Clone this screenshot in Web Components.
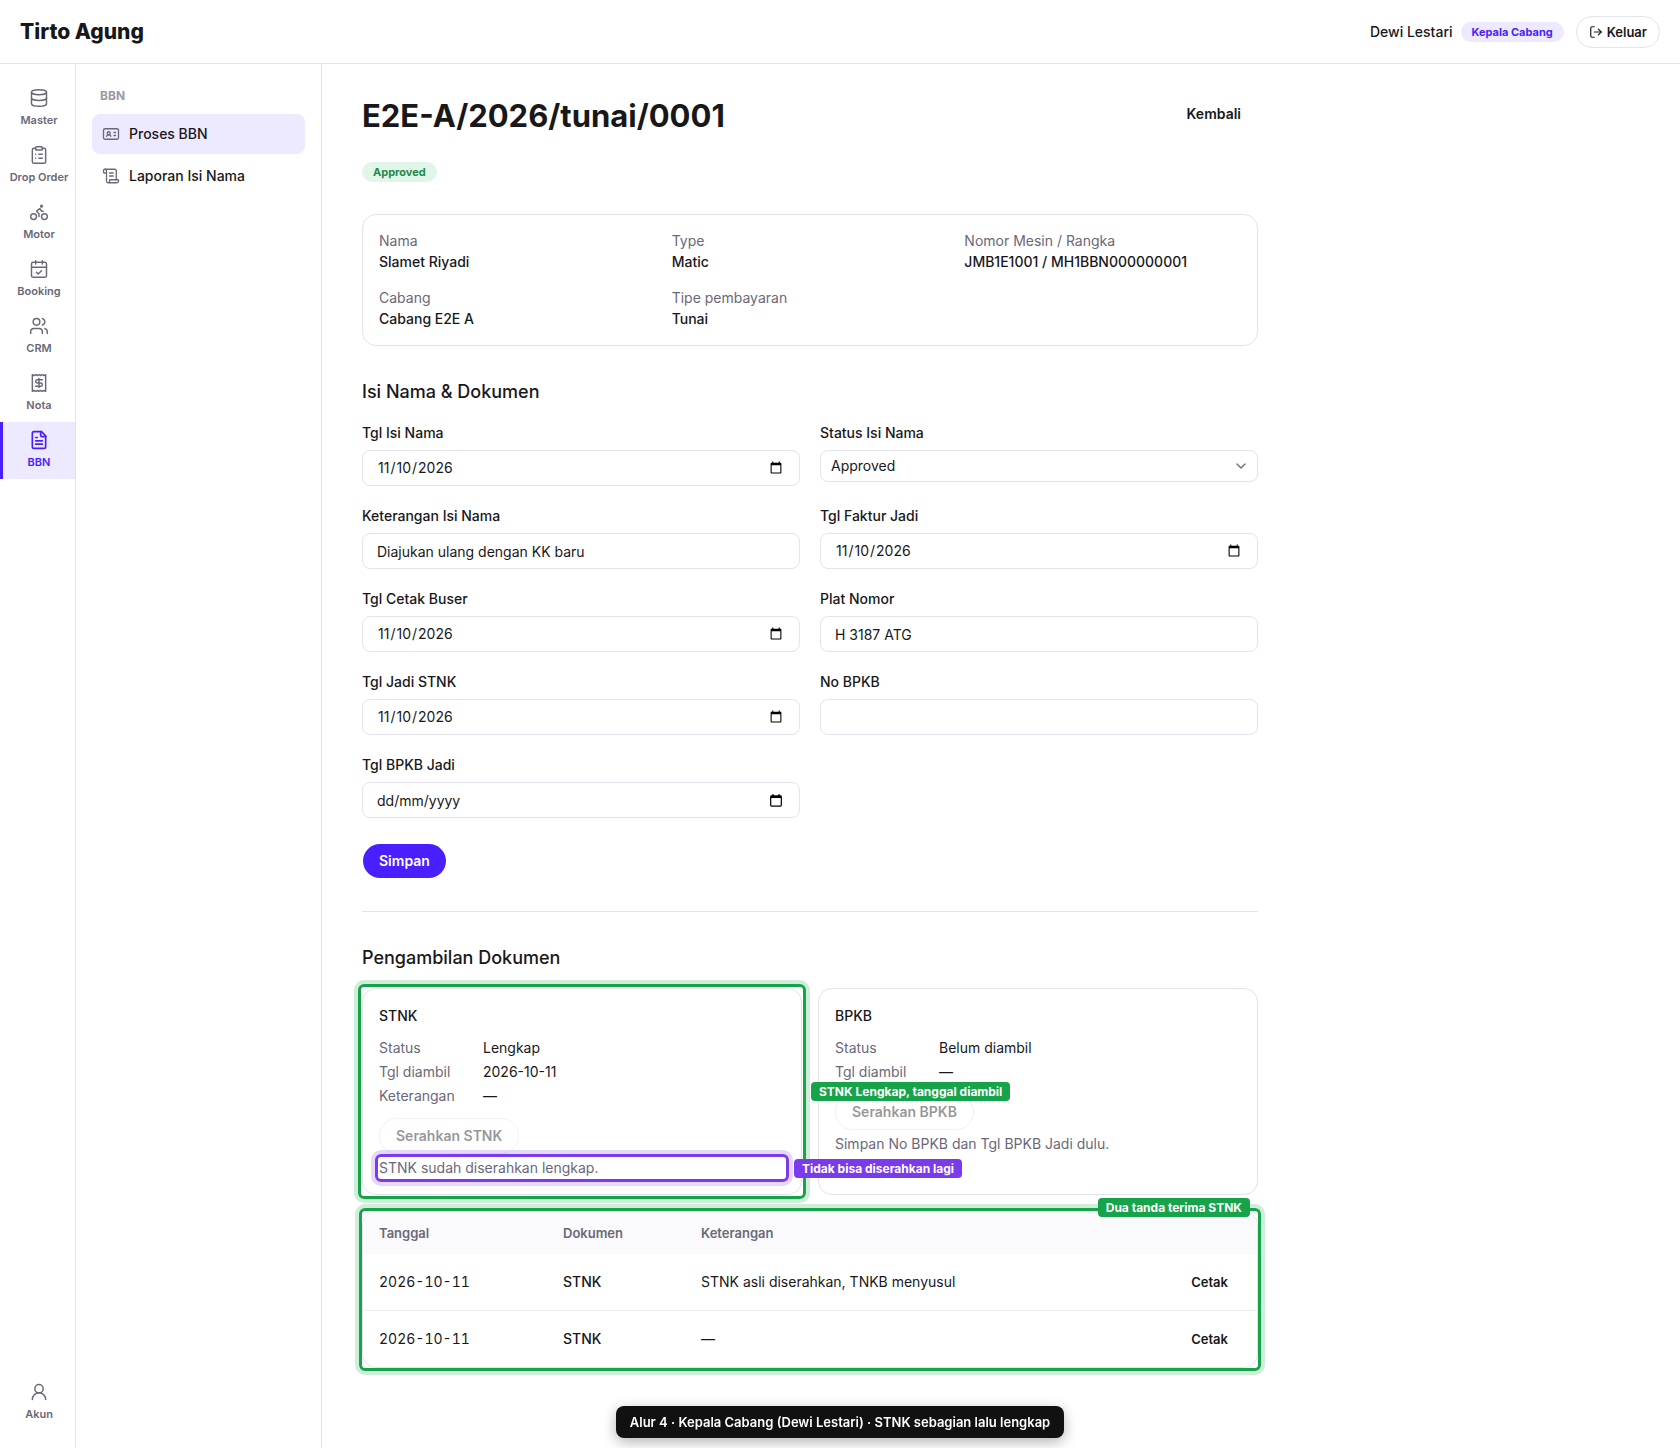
<!DOCTYPE html>
<html lang="id">
<head>
<meta charset="utf-8">
<meta name="viewport" content="width=device-width, initial-scale=1">
<title>Tirto Agung - Proses BBN</title>
<style>
    :root {
        --ink: #18181b;
        --muted: #6b6878;
        --faint: #9b98a8;
        --line: #e4e4e7;
        --edge: #e4e2ec;
        --accent: #4a1fff;
        --accent-soft: #ede9fe;
        --green: #16a34a;
        --violet: #7c3aed;
    }
    body {
        margin: 0;
        background: #fff;
        color: var(--ink);
        font: 14px/20px Inter, "Liberation Sans", sans-serif;
    }
    h1 {
        margin: 0;
        font-size: 31px;
        line-height: 40px;
        font-weight: 700;
    }
    h2 {
        margin: 32px 0 16px;
        font-size: 18px;
        line-height: 28px;
        font-weight: 500;
    }
    hr {
        margin: 32px 0;
        border: 0;
        border-top: 1px solid var(--line);
    }
    .title {
        display: flex;
        justify-content: space-between;
        align-items: flex-start;
        margin-bottom: 26px;
    }
    .fields {
        display: grid;
        grid-template-columns: 1fr 1fr;
        gap: 20px;
        margin: 17px 0 25px;
    }
    .documents {
        display: grid;
        grid-template-columns: 1fr 1fr;
        gap: 16px;
        margin-bottom: 16px;
    }
</style>
</head>
<body>
<app-shell>
    <app-header slot="header" brand="Tirto Agung" user="Dewi Lestari" role-name="Kepala Cabang"></app-header>

    <app-rail slot="rail">
        <rail-item icon="database">Master</rail-item>
        <rail-item icon="clipboard">Drop Order</rail-item>
        <rail-item icon="bike">Motor</rail-item>
        <rail-item icon="calendar">Booking</rail-item>
        <rail-item icon="users">CRM</rail-item>
        <rail-item icon="receipt">Nota</rail-item>
        <rail-item icon="file" active>BBN</rail-item>
        <rail-item icon="user" slot="bottom">Akun</rail-item>
    </app-rail>

    <side-nav slot="nav" heading="BBN">
        <side-item icon="idcard" active>Proses BBN</side-item>
        <side-item icon="scroll">Laporan Isi Nama</side-item>
    </side-nav>

    <div class="title">
        <h1>E2E-A/2026/tunai/0001</h1>
        <ui-button variant="ghost">Kembali</ui-button>
    </div>
    <ui-badge tone="green">Approved</ui-badge>

    <info-card>
        <info-item label="Nama">Slamet Riyadi</info-item>
        <info-item label="Type">Matic</info-item>
        <info-item label="Nomor Mesin / Rangka">JMB1E1001 / MH1BBN000000001</info-item>
        <info-item label="Cabang">Cabang E2E A</info-item>
        <info-item label="Tipe pembayaran">Tunai</info-item>
    </info-card>

    <h2>Isi Nama &amp; Dokumen</h2>
    <div class="fields">
        <form-field label="Tgl Isi Nama" type="date" value="2026-11-10"></form-field>
        <form-field label="Status Isi Nama" type="select" value="Approved"></form-field>
        <form-field label="Keterangan Isi Nama" value="Diajukan ulang dengan KK baru"></form-field>
        <form-field label="Tgl Faktur Jadi" type="date" value="2026-11-10"></form-field>
        <form-field label="Tgl Cetak Buser" type="date" value="2026-11-10"></form-field>
        <form-field label="Plat Nomor" value="H 3187 ATG"></form-field>
        <form-field label="Tgl Jadi STNK" type="date" value="2026-11-10"></form-field>
        <form-field label="No BPKB"></form-field>
        <form-field label="Tgl BPKB Jadi" type="date"></form-field>
    </div>
    <ui-button variant="primary">Simpan</ui-button>

    <hr>

    <h2>Pengambilan Dokumen</h2>
    <div class="documents">
        <mark-frame label="STNK Lengkap, tanggal diambil">
            <doc-card name="STNK" status="Lengkap" date="2026-10-11" note="—">
                <mark-frame tone="violet" label="Tidak bisa diserahkan lagi">STNK sudah diserahkan lengkap.</mark-frame>
            </doc-card>
        </mark-frame>
        <doc-card name="BPKB" status="Belum diambil" date="—">Simpan No BPKB dan Tgl BPKB Jadi dulu.</doc-card>
    </div>

    <mark-frame label="Dua tanda terima STNK" side="top" snug>
        <receipt-table></receipt-table>
    </mark-frame>
</app-shell>
<flow-caption>Alur 4 · Kepala Cabang (Dewi Lestari) · STNK sebagian lalu lengkap</flow-caption>

<script>
const ICONS = {
    database: '<ellipse cx="12" cy="5" rx="9" ry="3"/><path d="M3 5v14a9 3 0 0 0 18 0V5"/><path d="M3 12a9 3 0 0 0 18 0"/>',
    clipboard: '<rect x="8" y="2" width="8" height="4" rx="1"/><path d="M16 4h2a2 2 0 0 1 2 2v14a2 2 0 0 1-2 2H6a2 2 0 0 1-2-2V6a2 2 0 0 1 2-2h2"/><path d="M12 11h4M12 16h4M8 11h.01M8 16h.01"/>',
    bike: '<circle cx="18.5" cy="17.5" r="3.5"/><circle cx="5.5" cy="17.5" r="3.5"/><circle cx="15" cy="5" r="1"/><path d="M12 17.5V14l-3-3 4-3 2 3h2"/>',
    calendar: '<path d="M8 2v4M16 2v4"/><rect x="3" y="4" width="18" height="18" rx="2"/><path d="M3 10h18"/><path d="m9 16 2 2 4-4"/>',
    users: '<path d="M16 21v-2a4 4 0 0 0-4-4H6a4 4 0 0 0-4 4v2"/><circle cx="9" cy="7" r="4"/><path d="M22 21v-2a4 4 0 0 0-3-3.87"/><path d="M16 3.13a4 4 0 0 1 0 7.75"/>',
    receipt: '<path d="M4 2v20l2-1 2 1 2-1 2 1 2-1 2 1 2-1 2 1V2l-2 1-2-1-2 1-2-1-2 1-2-1-2 1Z"/><path d="M16 8h-6a2 2 0 1 0 0 4h4a2 2 0 1 1 0 4H8"/><path d="M12 17.5v-11"/>',
    file: '<path d="M15 2H6a2 2 0 0 0-2 2v16a2 2 0 0 0 2 2h12a2 2 0 0 0 2-2V7Z"/><path d="M14 2v4a2 2 0 0 0 2 2h4"/><path d="M10 9H8M16 13H8M16 17H8"/>',
    user: '<circle cx="12" cy="8" r="5"/><path d="M20 21a8 8 0 0 0-16 0"/>',
    idcard: '<rect x="2" y="5" width="20" height="14" rx="2"/><circle cx="9" cy="11" r="2"/><path d="M6.17 15a3 3 0 0 1 5.66 0"/><path d="M16 10h2M16 14h2"/>',
    scroll: '<path d="M15 12h-5M15 8h-5"/><path d="M19 17V5a2 2 0 0 0-2-2H4"/><path d="M8 21h12a2 2 0 0 0 2-2v-1a1 1 0 0 0-1-1H11a1 1 0 0 0-1 1v1a2 2 0 1 1-4 0V5a2 2 0 1 0-4 0v2a1 1 0 0 0 1 1h3"/>',
    logout: '<path d="M9 21H5a2 2 0 0 1-2-2V5a2 2 0 0 1 2-2h4"/><path d="m16 17 5-5-5-5"/><path d="M21 12H9"/>',
    chevron: '<path d="m6 9 6 6 6-6"/>'
};

const icon = (name, size, stroke = 2) =>
    `<svg width="${size}" height="${size}" viewBox="0 0 24 24" fill="none" stroke="currentColor" stroke-width="${stroke}" stroke-linecap="round" stroke-linejoin="round" aria-hidden="true">${ICONS[name]}</svg>`;

// Shared base: every element draws itself once from its attributes
class BaseElement extends HTMLElement {
    constructor() {
        super();
        this.attachShadow({ mode: 'open' });
    }

    connectedCallback() {
        this.shadowRoot.innerHTML = this.render();
    }

    attr(name) {
        return this.getAttribute(name) || '';
    }
}

class AppShell extends BaseElement {
    render() {
        return `
            <style>
                :host {
                    display: flex;
                    flex-direction: column;
                    min-height: 100vh;
                }
                .body {
                    display: flex;
                    flex: 1;
                }
                main {
                    flex: 1;
                    padding: 32px 40px;
                }
                .content {
                    max-width: 896px;
                }
            </style>
            <slot name="header"></slot>
            <div class="body">
                <slot name="rail"></slot>
                <slot name="nav"></slot>
                <main><div class="content"><slot></slot></div></main>
            </div>
        `;
    }
}

class AppHeader extends BaseElement {
    render() {
        return `
            <style>
                :host {
                    display: block;
                    border-bottom: 1px solid var(--line);
                }
                header {
                    display: flex;
                    align-items: center;
                    justify-content: space-between;
                    padding: 0 20px;
                    height: 63px;
                }
                .brand {
                    font-size: 21px;
                    font-weight: 800;
                }
                .user {
                    display: flex;
                    align-items: center;
                    font-weight: 500;
                }
                ui-badge {
                    margin: 0 12px 0 8px;
                }
            </style>
            <header>
                <div class="brand">${this.attr('brand')}</div>
                <div class="user">
                    <span>${this.attr('user')}</span>
                    <ui-badge>${this.attr('role-name')}</ui-badge>
                    <ui-button variant="outline" size="small" icon="logout">Keluar</ui-button>
                </div>
            </header>
        `;
    }
}

class AppRail extends BaseElement {
    render() {
        return `
            <style>
                :host {
                    display: block;
                    box-sizing: border-box;
                    width: 76px;
                    flex: none;
                    border-right: 1px solid var(--line);
                }
                nav {
                    display: flex;
                    flex-direction: column;
                    box-sizing: border-box;
                    height: 100%;
                    padding: 16px 0 17px;
                }
                .bottom {
                    margin-top: auto;
                }
            </style>
            <nav aria-label="Menu utama">
                <slot></slot>
                <div class="bottom"><slot name="bottom"></slot></div>
            </nav>
        `;
    }
}

class RailItem extends BaseElement {
    render() {
        return `
            <style>
                :host {
                    display: block;
                    color: var(--muted);
                }
                a {
                    display: flex;
                    flex-direction: column;
                    align-items: center;
                    gap: 4px;
                    padding: 8px 0;
                    border-left: 3px solid transparent;
                    color: inherit;
                    font-size: 11px;
                    line-height: 17px;
                    font-weight: 600;
                    text-decoration: none;
                    white-space: nowrap;
                }
                svg {
                    display: block;
                }
                :host([active]) a {
                    border-left-color: var(--accent);
                    background: var(--accent-soft);
                    color: var(--accent);
                }
            </style>
            <a href="#">${icon(this.attr('icon'), 20, this.hasAttribute('active') ? 2 : 1.75)}<slot></slot></a>
        `;
    }
}

class SideNav extends BaseElement {
    render() {
        return `
            <style>
                :host {
                    display: block;
                    box-sizing: border-box;
                    width: 246px;
                    flex: none;
                    padding: 22px 16px;
                    border-right: 1px solid var(--line);
                }
                .heading {
                    padding: 0 8px 8px;
                    color: var(--faint);
                    font-size: 12px;
                    font-weight: 700;
                }
                nav {
                    display: flex;
                    flex-direction: column;
                    gap: 2px;
                }
            </style>
            <div class="heading">${this.attr('heading')}</div>
            <nav aria-label="${this.attr('heading')}"><slot></slot></nav>
        `;
    }
}

class SideItem extends BaseElement {
    render() {
        return `
            <style>
                :host {
                    display: block;
                }
                a {
                    display: flex;
                    align-items: center;
                    gap: 9px;
                    padding: 10px;
                    border-radius: 8px;
                    color: var(--ink);
                    font-weight: 500;
                    text-decoration: none;
                }
                svg {
                    color: var(--muted);
                }
                :host([active]) a {
                    background: var(--accent-soft);
                }
            </style>
            <a href="#">${icon(this.attr('icon'), 18, 1.75)}<slot></slot></a>
        `;
    }
}

class UiBadge extends BaseElement {
    render() {
        return `
            <style>
                :host {
                    display: block;
                    width: fit-content;
                    padding: 0 11px;
                    border-radius: 10px;
                    background: var(--accent-soft);
                    color: var(--accent);
                    font-size: 11px;
                    line-height: 20px;
                    font-weight: 700;
                }
                :host([tone="green"]) {
                    background: #e2f5e9;
                    color: #1c8a4c;
                }
            </style>
            <slot></slot>
        `;
    }
}

class UiButton extends BaseElement {
    render() {
        const name = this.attr('icon');
        return `
            <style>
                :host {
                    display: block;
                    width: fit-content;
                }
                button {
                    display: flex;
                    align-items: center;
                    gap: 4px;
                    box-sizing: border-box;
                    height: 36px;
                    padding: 0 16px;
                    border: 1px solid transparent;
                    border-radius: 18px;
                    background: transparent;
                    background-clip: padding-box;
                    color: var(--ink);
                    font: 600 14px/20px Inter, "Liberation Sans", sans-serif;
                    white-space: nowrap;
                }
                :host([variant="primary"]) button {
                    background-color: var(--accent);
                    color: #fff;
                }
                :host([variant="outline"]) button {
                    border-color: var(--edge);
                }
                :host([size="small"]) button {
                    height: 32px;
                    padding: 0 12px;
                    font-size: 13px;
                }
                button:disabled {
                    opacity: 0.45;
                }
            </style>
            <button type="button" ${this.hasAttribute('disabled') ? 'disabled' : ''}>${name ? icon(name, 14, 2) : ''}<slot></slot></button>
        `;
    }
}

class InfoCard extends BaseElement {
    render() {
        return `
            <style>
                :host {
                    display: grid;
                    grid-template-columns: repeat(3, 1fr);
                    gap: 16px;
                    margin-top: 32px;
                    padding: 16px;
                    border: 1px solid var(--edge);
                    border-radius: 14px;
                }
            </style>
            <slot></slot>
        `;
    }
}

class InfoItem extends BaseElement {
    render() {
        return `
            <style>
                :host {
                    display: block;
                }
                .label {
                    color: var(--muted);
                }
                .value {
                    line-height: 21px;
                    font-weight: 500;
                }
            </style>
            <div class="label">${this.attr('label')}</div>
            <div class="value"><slot></slot></div>
        `;
    }
}

class FormField extends BaseElement {
    control() {
        const value = this.attr('value');
        switch (this.attr('type')) {
            case 'select':
                return `<select id="control"><option>${value}</option></select>${icon('chevron', 16, 2)}`;
            case 'date':
                if (value) {
                    return `<input id="control" type="date" value="${value}">`;
                }
                // an empty date keeps the local dd/mm/yyyy hint
                return `
                    <input id="control" type="text" inputmode="numeric" placeholder="dd/mm/yyyy">
                    <button type="button" aria-label="Pilih tanggal">
                        <svg width="12" height="13" viewBox="0 0 12 13" aria-hidden="true">
                            <path d="M1 2h10v2H1z" fill="#000"/>
                            <path d="M3 0v2M9 0v2" stroke="#000" stroke-width="1.2"/>
                            <rect x="0.7" y="1.9" width="10.6" height="10.2" rx="0.8" fill="none" stroke="#000" stroke-width="1.2"/>
                        </svg>
                    </button>`;
            default:
                return `<input id="control" type="text" value="${value}">`;
        }
    }

    render() {
        return `
            <style>
                :host {
                    display: block;
                }
                label {
                    display: block;
                    margin-bottom: 7px;
                    font-weight: 500;
                }
                .box {
                    display: flex;
                    align-items: center;
                    box-sizing: border-box;
                    height: 36px;
                    border: 1px solid var(--edge);
                    border-radius: 8px;
                }
                input, select {
                    flex: 1;
                    box-sizing: border-box;
                    min-width: 0;
                    height: 100%;
                    margin: 0;
                    padding: 0 14px;
                    border: 0;
                    border-radius: 8px;
                    background: transparent;
                    color: inherit;
                    font: inherit;
                }
                input::placeholder {
                    color: inherit;
                    opacity: 1;
                }
                button {
                    display: flex;
                    padding: 0 17px;
                    border: 0;
                    background: none;
                }
                .select {
                    height: 32px;
                    padding-right: 8px;
                }
                .select svg {
                    color: var(--muted);
                }
                select {
                    appearance: none;
                    padding: 0 10px;
                }
            </style>
            <label for="control">${this.attr('label')}</label>
            <div class="box ${this.attr('type')}">${this.control()}</div>
        `;
    }
}

class DocCard extends BaseElement {
    render() {
        const note = this.attr('note');
        return `
            <style>
                :host {
                    display: block;
                    padding: 16px;
                    border: 1px solid var(--edge);
                    border-radius: 14px;
                }
                h3 {
                    margin: 0 0 12px;
                    font-size: 14px;
                    line-height: 21px;
                    font-weight: 500;
                }
                dl {
                    display: grid;
                    grid-template-columns: 96px 1fr;
                    gap: 4px 8px;
                    margin: 0 0 12px;
                }
                dt {
                    color: var(--muted);
                }
                dd {
                    margin: 0;
                }
                .hint {
                    margin-top: 4px;
                    color: var(--muted);
                }
            </style>
            <h3>${this.attr('name')}</h3>
            <dl>
                <dt>Status</dt><dd>${this.attr('status')}</dd>
                <dt>Tgl diambil</dt><dd>${this.attr('date')}</dd>
                ${note ? `<dt>Keterangan</dt><dd>${note}</dd>` : ''}
            </dl>
            <ui-button variant="outline" disabled>Serahkan ${this.attr('name')}</ui-button>
            <div class="hint"><slot></slot></div>
        `;
    }
}

class ReceiptTable extends BaseElement {
    render() {
        const rows = [
            ['2026-10-11', 'STNK', 'STNK asli diserahkan, TNKB menyusul'],
            ['2026-10-11', 'STNK', '—']
        ];
        return `
            <style>
                :host {
                    display: block;
                    overflow: hidden;
                    border: 1px solid var(--edge);
                    border-radius: 14px;
                }
                table {
                    width: 100%;
                    table-layout: fixed;
                    border-collapse: separate;
                    border-spacing: 0;
                }
                th {
                    height: 42px;
                    padding: 0 16px;
                    background: #fafafc;
                    color: var(--muted);
                    font-size: 13px;
                    font-weight: 600;
                    text-align: left;
                }
                td {
                    height: 56px;
                    padding: 0 16px;
                }
                tr + tr td {
                    border-top: 1px solid #ededf1;
                }
                .date {
                    width: 152px;
                    font-variant-numeric: tabular-nums;
                }
                .doc {
                    width: 106px;
                }
                td.doc {
                    font-weight: 500;
                }
                .action {
                    width: 80px;
                }
                ui-button {
                    margin-left: auto;
                }
            </style>
            <table>
                <thead>
                    <tr>
                        <th class="date">Tanggal</th>
                        <th class="doc">Dokumen</th>
                        <th>Keterangan</th>
                        <th class="action"></th>
                    </tr>
                </thead>
                <tbody>
                    ${rows.map(([date, doc, note]) => `
                        <tr>
                            <td class="date">${date}</td>
                            <td class="doc">${doc}</td>
                            <td>${note}</td>
                            <td class="action"><ui-button size="small">Cetak</ui-button></td>
                        </tr>
                    `).join('')}
                </tbody>
            </table>
        `;
    }
}

// Coloured frame with a tag, laid over whatever it wraps
class MarkFrame extends BaseElement {
    render() {
        return `
            <style>
                :host {
                    --tone: var(--green);
                    --halo: rgba(22, 163, 74, 0.2);
                    --reach: -4px;
                    --layer: 1;
                    display: grid;
                    position: relative;
                }
                :host([tone="violet"]) {
                    --tone: var(--violet);
                    --halo: rgba(124, 58, 237, 0.2);
                    --layer: 2;
                }
                :host([snug]) {
                    --reach: -3px;
                }
                .frame {
                    position: absolute;
                    inset: var(--reach);
                    z-index: var(--layer);
                    display: flex;
                    align-items: center;
                    border: 3px solid var(--tone);
                    border-radius: 6px;
                    box-shadow: 0 0 0 4px var(--halo);
                    pointer-events: none;
                }
                .tag {
                    position: absolute;
                    left: calc(100% + 8px);
                    padding: 0 8px;
                    border-radius: 4px;
                    background: var(--tone);
                    color: #fff;
                    font-size: 12px;
                    line-height: 19px;
                    font-weight: 700;
                    white-space: nowrap;
                }
                :host([side="top"]) .tag {
                    top: -13px;
                    right: 8px;
                    left: auto;
                }
            </style>
            <slot></slot>
            <div class="frame"><span class="tag">${this.attr('label')}</span></div>
        `;
    }
}

class FlowCaption extends BaseElement {
    render() {
        return `
            <style>
                :host {
                    display: flex;
                    justify-content: center;
                    position: fixed;
                    inset: auto 0 10px;
                    z-index: 5;
                    pointer-events: none;
                }
                div {
                    padding: 6px 14px;
                    border-radius: 8px;
                    background: #111;
                    box-shadow: 0 4px 14px rgba(0, 0, 0, 0.3);
                    color: #fff;
                    font-size: 13px;
                    font-weight: 600;
                }
            </style>
            <div><slot></slot></div>
        `;
    }
}

customElements.define('ui-badge', UiBadge);
customElements.define('ui-button', UiButton);
customElements.define('app-shell', AppShell);
customElements.define('app-header', AppHeader);
customElements.define('app-rail', AppRail);
customElements.define('rail-item', RailItem);
customElements.define('side-nav', SideNav);
customElements.define('side-item', SideItem);
customElements.define('info-card', InfoCard);
customElements.define('info-item', InfoItem);
customElements.define('form-field', FormField);
customElements.define('doc-card', DocCard);
customElements.define('receipt-table', ReceiptTable);
customElements.define('mark-frame', MarkFrame);
customElements.define('flow-caption', FlowCaption);
</script>
</body>
</html>
